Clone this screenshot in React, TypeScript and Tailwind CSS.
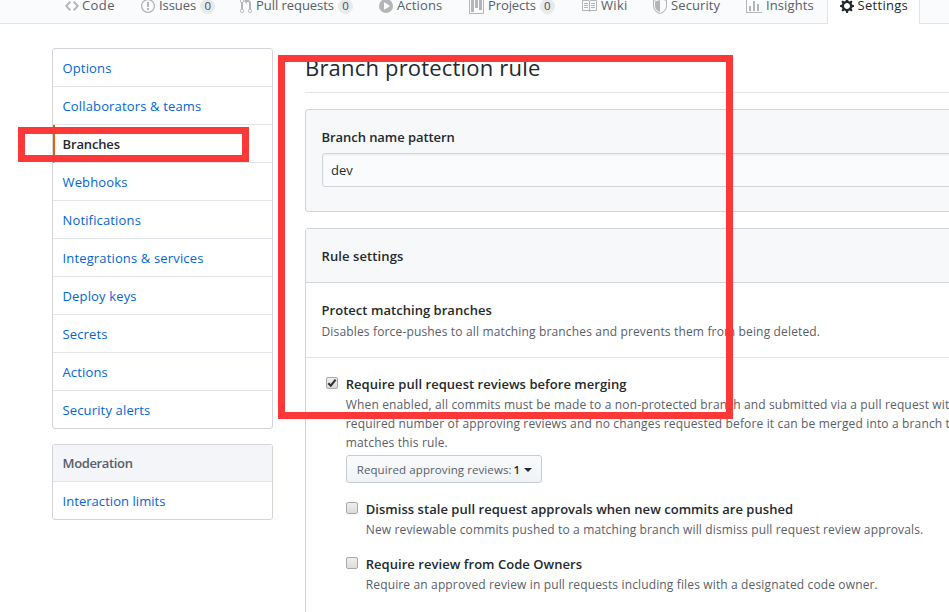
import type { ReactNode } from "react";

const icons = {
  code: "M9.5 3L8 4.5 11.5 8 8 11.5 9.5 13 14 8 9.5 3zm-5 0L0 8l4.5 5L6 11.5 2.5 8 6 4.5 4.5 3z",
  issue:
    "M7 2.3c3.14 0 5.7 2.56 5.7 5.7s-2.56 5.7-5.7 5.7A5.71 5.71 0 0 1 1.3 8c0-3.14 2.56-5.7 5.7-5.7zM7 1C3.14 1 0 4.14 0 8s3.14 7 7 7 7-3.14 7-7-3.14-7-7-7zm1 3H6v5h2V4zm0 6H6v2h2v-2z",
  pull: "M11 11.28V5c-.03-.78-.34-1.47-.94-2.06C9.46 2.35 8.78 2.03 8 2H7V0L4 3l3 3V4h1c.27.02.48.11.69.31.21.2.3.42.31.69v6.28A1.993 1.993 0 0 0 10 15a1.993 1.993 0 0 0 1-3.72zm-1 2.92c-.66 0-1.2-.55-1.2-1.2 0-.65.55-1.2 1.2-1.2.65 0 1.2.55 1.2 1.2 0 .65-.55 1.2-1.2 1.2zM4 3c0-1.11-.89-2-2-2a1.993 1.993 0 0 0-1 3.72v6.56A1.993 1.993 0 0 0 2 15a1.993 1.993 0 0 0 1-3.72V4.72c.59-.34 1-.98 1-1.72zm-.8 10c0 .66-.55 1.2-1.2 1.2-.65 0-1.2-.55-1.2-1.2 0-.65.55-1.2 1.2-1.2.65 0 1.2.55 1.2 1.2zM2 4.2C1.34 4.2.8 3.65.8 3c0-.65.55-1.2 1.2-1.2.65 0 1.2.55 1.2 1.2 0 .65-.55 1.2-1.2 1.2z",
  play: "M14 8A7 7 0 1 1 0 8a7 7 0 0 1 14 0zm-8.223 3.482l4.599-3.066a.5.5 0 0 0 0-.832L5.777 4.518A.5.5 0 0 0 5 4.934v6.132a.5.5 0 0 0 .777.416z",
  project:
    "M10 12h3V2h-3v10zm-4-2h3V2H6v8zm-4 4h3V2H2v12zm-1 1h13V1H1v14zM14 0H1a1 1 0 0 0-1 1v14a1 1 0 0 0 1 1h13a1 1 0 0 0 1-1V1a1 1 0 0 0-1-1z",
  book: "M3 5h4v1H3V5zm0 3h4V7H3v1zm0 2h4V9H3v1zm11-5h-4v1h4V5zm0 2h-4v1h4V7zm0 2h-4v1h4V9zm2-6v9c0 .55-.45 1-1 1H9.5l-1 1-1-1H2c-.55 0-1-.45-1-1V3c0-.55.45-1 1-1h5.5l1 1 1-1H15c.55 0 1 .45 1 1zm-8 .5L7.5 3H2v9h6V3.5zm7-.5H9.5l-.5.5V12h6V3z",
  shield:
    "M0 2l7-2 7 2v6.02C14 12.69 8.69 16 7 16c-1.69 0-7-3.31-7-7.98V2zm1 .75L7 1l6 1.75v5.268C13 12.104 8.449 15 7 15c-1.449 0-6-2.896-6-6.982V2.75zm1 .75L7 2v12c-1.207 0-5-2.482-5-5.985V3.5z",
  graph: "M16 14v1H0V0h1v14h15zM5 13H3V8h2v5zm4 0H7V3h2v10zm4 0h-2V6h2v7z",
  gear: "M14 8.77v-1.6l-1.94-.64-.45-1.09.88-1.84-1.13-1.13-1.81.91-1.09-.45-.69-1.92h-1.6l-.63 1.94-1.11.45-1.84-.88-1.13 1.13.91 1.81-.45 1.09L0 7.23v1.59l1.94.64.45 1.09-.88 1.84 1.13 1.13 1.81-.91 1.09.45.69 1.92h1.59l.63-1.94 1.11-.45 1.84.88 1.13-1.13-.92-1.81.47-1.09L14 8.75v.02zM7 11c-1.66 0-3-1.34-3-3s1.34-3 3-3 3 1.34 3 3-1.34 3-3 3z",
};

type Tab = { icon: keyof typeof icons; w: number; label: string; count?: string; box: string; track: string };

const tabs: Tab[] = [
  { icon: "code", w: 14, label: "Code", box: "w-[76px] gap-[3px]", track: "tracking-[0.4px]" },
  { icon: "issue", w: 14, label: "Issues", count: "0", box: "w-[99px] gap-[4px]", track: "tracking-[-0.05px]" },
  { icon: "pull", w: 12, label: "Pull requests", count: "0", box: "w-[139px] gap-[4px]", track: "tracking-[-0.05px]" },
  { icon: "play", w: 14, label: "Actions", box: "w-[90px] gap-[4px]", track: "tracking-[0.15px]" },
  { icon: "project", w: 15, label: "Projects", count: "0", box: "w-[112px] gap-[4px]", track: "tracking-[-0.1px]" },
  { icon: "book", w: 16, label: "Wiki", box: "w-[72px] gap-[4px]", track: "tracking-[0.3px]" },
  { icon: "shield", w: 14, label: "Security", box: "w-[93px] gap-[4px]", track: "tracking-[0.1px]" },
  { icon: "graph", w: 16, label: "Insights", box: "w-[81px] gap-[4px]", track: "tracking-[0.1px]" },
];

function Icon({ name, w }: { name: keyof typeof icons; w: number }) {
  return (
    <svg width={w} height={16} viewBox={`0 0 ${w} 16`} className="shrink-0" fill="currentColor">
      <path fillRule="evenodd" d={icons[name]} />
    </svg>
  );
}

function Nav() {
  return (
    <nav className="flex h-6 text-[13px]">
      <div className="flex flex-1 border-b border-[#e1e4e8] bg-[#fafbfc] pl-[65px] text-[#586069]">
        {tabs.map((t) => (
          <div key={t.label} className={`flex h-3 shrink-0 items-center whitespace-nowrap ${t.box}`}>
            <span className="text-[#b3b5b8]">
              <Icon name={t.icon} w={t.w} />
            </span>
            <span className={t.track}>{t.label}</span>
            {t.count && (
              <span className="flex h-[15px] w-[15px] shrink-0 items-center justify-center rounded-full bg-[#e8e9eb] text-[11.5px] font-medium text-[#444d56]">
                {t.count}
              </span>
            )}
          </div>
        ))}
      </div>
      <div className="h-6 w-[93px] shrink-0 border-x border-[#e1e4e8] pl-3 text-[#24292e]">
        <div className="flex h-3 items-center gap-[3.5px] tracking-[0.3px]">
          <Icon name="gear" w={14} />
          <span>Settings</span>
        </div>
      </div>
      <div className="w-[29px] shrink-0 border-b border-[#e1e4e8] bg-[#fafbfc]" />
    </nav>
  );
}

const menu = [
  "Options",
  "Collaborators & teams",
  "Branches",
  "Webhooks",
  "Notifications",
  "Integrations & services",
  "Deploy keys",
  "Secrets",
  "Actions",
  "Security alerts",
];

function Sidebar() {
  return (
    <aside className="flex w-[221px] shrink-0 flex-col gap-[15px] text-[13px] tracking-[0.15px] text-[#0366d6]">
      <ul className="rounded-[3px] border border-[#d1d5da]">
        {menu.map((label) => (
          <li
            key={label}
            className={
              label === "Branches"
                ? "flex h-[38px] items-center border-b border-l-2 border-b-[#e1e4e8] border-l-[#e36209] pt-[2px] pl-[7.5px] font-semibold tracking-[-0.15px] text-[#24292e]"
                : "flex h-[38px] items-center border-b border-[#e1e4e8] pt-[2px] pl-[9.5px] last:h-[37px] last:border-b-0"
            }
          >
            {label}
          </li>
        ))}
      </ul>
      <div className="rounded-[3px] border border-[#d1d5da]">
        <h3 className="flex h-[37px] items-center border-b border-[#e1e4e8] bg-[#f3f5f8] pt-px pl-[9.5px] font-semibold tracking-[-0.35px] text-[#586069]">
          Moderation
        </h3>
        <div className="flex h-[37px] items-center pt-[2px] pl-[9.5px] tracking-[0.05px]">Interaction limits</div>
      </div>
    </aside>
  );
}

function Checkbox({ checked = false }: { checked?: boolean }) {
  return (
    <span className="mt-[3px] flex h-3 w-3 shrink-0 items-center justify-center rounded-[2px] border border-[#a9a9a9] bg-linear-to-b from-[#eeeeee] to-[#dcdcdc]">
      {checked && (
        <svg width="10" height="10" viewBox="0 0 10 10" fill="none" stroke="#333" strokeWidth="2.1">
          <path d="M1.3 5.2L3.8 7.6L8.6 1.6" />
        </svg>
      )}
    </span>
  );
}

function Option({ title, checked, children }: { title: string; checked?: boolean; children: ReactNode }) {
  return (
    <div className="flex gap-[7.75px]">
      <Checkbox checked={checked} />
      <div className="whitespace-nowrap">
        <h4 className="h-[21px] text-[13px] leading-5 font-semibold tracking-[0.04px] text-[#24292e]">{title}</h4>
        {children}
      </div>
    </div>
  );
}

function Content() {
  return (
    <main className="w-[760px] shrink-0 text-[#24292e]">
      <h2 className="h-[45px] border-b border-[#e1e4e8] pt-[3px] text-[22px] leading-[32px] tracking-[0.19px]">
        Branch protection rule
      </h2>
      <section className="mt-4 h-[103px] rounded-[3px] border border-[#d1d5da] bg-[#f6f8fa] pt-[17px] pl-4">
        <label className="-ml-[0.5px] block text-[13px] leading-5 font-semibold tracking-[-0.06px]">
          Branch name pattern
        </label>
        <div className="mt-[6px] flex h-[34px] items-center rounded-[3px] border border-[#d1d5da] bg-[#fafbfc] pt-[2px] pl-2 text-[13px] shadow-[inset_0_1px_2px_rgba(27,31,35,0.075)]">
          dev
        </div>
      </section>
      <section className="mt-4 h-[420px] rounded-[3px] border border-[#d1d5da] bg-white">
        <h3 className="flex h-[54px] items-center border-b border-[#d1d5da] bg-[#f6f8fa] pt-[2px] pl-[15.5px] text-[13px] font-semibold tracking-[0.1px]">
          Rule settings
        </h3>
        <div className="h-[75px] border-b border-[#e1e4e8] pt-[17px] pl-[15.5px]">
          <h4 className="text-[13px] leading-[21px] font-semibold tracking-[0.04px]">Protect matching branches</h4>
          <p className="text-[12px] leading-[21px] tracking-[0.155px] text-[#586069]">
            Disables force-pushes to all matching branches and prevents them from being deleted.
          </p>
        </div>
        <div className="pt-4 pl-5">
          <Option title="Require pull request reviews before merging" checked>
            <div className="text-[12px] leading-[19px] tracking-[0.15px] text-[#586069]">
              <p>When enabled, all commits must be made to a non-protected branch and submitted via a pull request with the</p>
              <p>required number of approving reviews and no changes requested before it can be merged into a branch that</p>
              <p>matches this rule.</p>
            </div>
            <button className="mt-[3px] flex h-7 w-[196px] items-center rounded-[3px] border border-[#c8cbcf] bg-linear-to-b from-[#fafbfc] to-[#eff3f6] pt-[2px] pl-[10px] text-[11.5px] font-medium tracking-[0.09px] text-[#586069]">
              <span>Required approving reviews:</span>
              <span className="ml-[2px] font-semibold text-[#24292e]">1</span>
              <span className="ml-1 border-x-4 border-t-4 border-x-transparent border-t-[#24292e]" />
            </button>
            <div className="mt-4 ml-[0.25px] flex flex-col gap-[15px] text-[12px] leading-[19px] tracking-[0.14px] text-[#586069]">
              <Option title="Dismiss stale pull request approvals when new commits are pushed">
                <p>New reviewable commits pushed to a matching branch will dismiss pull request review approvals.</p>
              </Option>
              <Option title="Require review from Code Owners">
                <p>Require an approved review in pull requests including files with a designated code owner.</p>
              </Option>
            </div>
          </Option>
        </div>
      </section>
    </main>
  );
}

export default function App() {
  return (
    <div className="relative h-[612px] w-[949px] overflow-hidden bg-white font-['Open_Sans','Noto_Sans',sans-serif]">
      <Nav />
      <div className="flex gap-8 pt-6 pl-[52px]">
        <Sidebar />
        <Content />
      </div>
      <div className="absolute top-[55px] left-[278px] h-[364px] w-[455px] border-[7px] border-[#fc3838]" />
      <div className="absolute top-[127px] left-[18px] h-[35px] w-[231px] border-[7px] border-[#fc3838]" />
    </div>
  );
}
